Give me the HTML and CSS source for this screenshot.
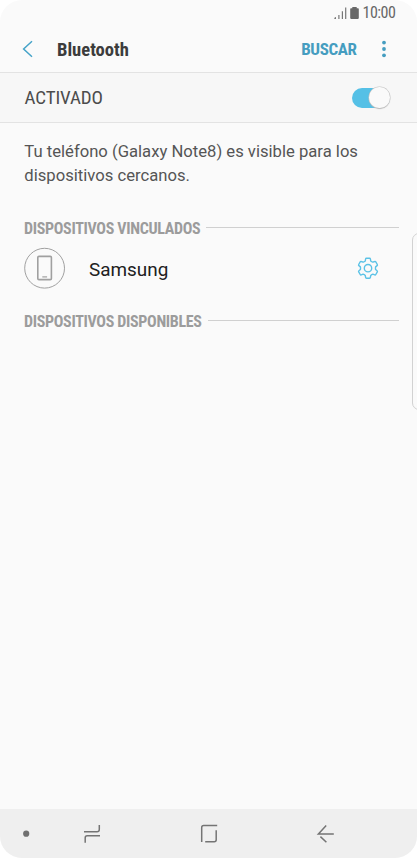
FILE: index.html
```html
<!DOCTYPE html>
<html lang="es">
<head>
<meta charset="utf-8">
<title>Bluetooth</title>
<link rel="stylesheet" href="styles.css">
</head>
<body>
<div class="phone">
  <div class="status">
    <svg class="signal" width="13" height="13" viewBox="0 0 13 13"><path d="M1.3 10.3v1.7M4.9 8v4M8.4 4.3V12M11.7 0.5V12" stroke="#777" stroke-width="1.2"/><path d="M0 12L2 10v2z" fill="#777"/></svg>
    <svg class="battery" width="9" height="13" viewBox="0 0 9 13"><path d="M2.3 0.1h4.4v1.2H8q.8 0 .8.8v9q0 .8-.8.8H1q-.8 0-.8-.8v-9q0-.8.8-.8h1.3z" fill="#686868"/></svg>
    <span class="cond time">10:00</span>
  </div>
  <header class="bar">
    <svg class="back" width="12" height="18" viewBox="0 0 12 18"><path d="M10 1.2L1.6 9l8.4 7.8" fill="none" stroke="#45a3c8" stroke-width="1.5"/></svg>
    <h1 class="cond title">Bluetooth</h1>
    <span class="cond search">BUSCAR</span>
    <svg class="more" width="4" height="18" viewBox="0 0 4 18" fill="#459dc0"><circle cx="2" cy="2.6" r="1.9"/><circle cx="2" cy="9" r="1.9"/><circle cx="2" cy="15.3" r="1.9"/></svg>
  </header>
  <div class="toggle-row">
    <span class="cond state">ACTIVADO</span>
    <span class="switch"><span class="knob"></span></span>
  </div>
  <p class="info">Tu teléfono (Galaxy Note8) es visible para los dispositivos cercanos.</p>
  <h2 class="section"><span class="cond linked">DISPOSITIVOS VINCULADOS</span></h2>
  <div class="device">
    <svg width="42" height="42" viewBox="0 0 42 42" fill="none" stroke="#a0a0a0"><circle cx="20.6" cy="21.2" r="19.9"/><rect x="13.8" y="9.4" width="13.6" height="23.2" rx="1.2" stroke-width="1.6"/><path d="M18.3 29.9h4.8" stroke-width="1.2"/></svg>
    <span class="name">Samsung</span>
    <svg class="gear" width="22" height="22" viewBox="0 0 22 22" fill="none" stroke="#5bc2e6" stroke-width="1.4" stroke-linejoin="round"><circle cx="11" cy="11.2" r="3.7"/><path d="M9.5 1.2h3q.8 0 .9.8l.3 1.9q1 .9 2.2 1.3l1.8-.7q.7-.3 1.1.4l1.5 2.6q.4.7-.2 1.1l-1.5 1.3q-.3 1.3 0 2.6l1.5 1.3q.6.4.2 1.1l-1.5 2.6q-.4.7-1.1.4l-1.8-.7q-1.2.4-2.2 1.3l-.3 1.9q-.1.8-.9.8h-3q-.8 0-.9-.8l-.3-1.9q-1-.9-2.2-1.3l-1.8.7q-.7.3-1.1-.4l-1.5-2.6q-.4-.7.2-1.1l1.5-1.3q.3-1.3 0-2.6L1.9 8.6q-.6-.4-.2-1.1l1.5-2.6q.4-.7 1.1-.4l1.8.7q1.2-.4 2.2-1.3L8.6 2q.1-.8.9-.8z"/></svg>
  </div>
  <h2 class="section available-head"><span class="cond available">DISPOSITIVOS DISPONIBLES</span></h2>
  <nav class="nav">
    <svg width="417" height="49" viewBox="0 0 417 49" fill="none" stroke="#747474" stroke-width="1.5"><circle cx="26.2" cy="24.7" r="3.1" fill="#707070" stroke="none"/><path d="M84 22.8h13q2.3 0 2.3-2.3V16M100 26.8H87.2q-2 0-2 2V33.8M201.7 33V18.6q0-2 2-2H217.2M216.2 21.2v9.6q0 2-2 2H205.2M333.8 24.9h-15.4L326.2 16.5M320.4 27.6l6 5.6"/></svg>
  </nav>
  <div class="edge"></div>
</div>
</body>
</html>
```
FILE: styles.css
```css
body {
  margin: 0;
  background: #fff;
  font-family: Roboto, sans-serif;
}
.phone {
  position: relative;
  display: flex;
  flex-direction: column;
  width: 417px;
  height: 858px;
  box-sizing: border-box;
  overflow: hidden;
  border-radius: 22px;
  background: #fafafa;
}
.cond {
  font-family: "Roboto Condensed", Roboto, sans-serif;
  font-stretch: 75%;
  white-space: nowrap;
}
.status {
  display: flex;
  align-items: center;
  height: 26px;
  padding-left: 334px;
}
.battery { margin-left: 3px; }
.time {
  margin-left: 3.5px;
  padding-bottom: 1px;
  font-size: 16px;
  letter-spacing: -0.5px;
  color: #666;
}
.bar {
  display: flex;
  align-items: center;
  height: 46px;
  padding: 0 31px 0 22px;
  border-bottom: 1px solid #e3e3e3;
}
.title {
  margin: 0 auto 0 23px;
  padding-top: 1.5px;
  font-size: 18.6px;
  font-weight: 700;
  color: #3c3c3c;
}
.search {
  font-size: 17px;
  font-weight: 700;
  letter-spacing: -0.4px;
  color: #459dc0;
}
.more { margin-left: 25.5px; }
.toggle-row {
  display: flex;
  align-items: center;
  justify-content: space-between;
  height: 49px;
  padding: 0 27px 0 24.5px;
  background: #f7f7f7;
  border-bottom: 1px solid #e3e3e3;
}
.state {
  font-size: 19px;
  letter-spacing: -0.1px;
  color: #4c4c4c;
}
.switch {
  display: flex;
  align-items: center;
  justify-content: flex-end;
  width: 37.5px;
  height: 20px;
  margin-right: .5px;
  border-radius: 10px;
  background: #55c0e6;
}
.knob {
  width: 20.5px;
  height: 21px;
  border-radius: 50%;
  background: #fafafa;
  box-shadow: 0 0 0 .5px #c4c4c4, 0 1px 1px #b4b4b4;
}
.info {
  width: 350px;
  margin: 17px 0 0 24.3px;
  font-size: 16.65px;
  line-height: 24px;
  color: #555;
}
.section {
  display: flex;
  align-items: center;
  gap: 6px;
  height: 20px;
  margin: 29.5px 18px 0 24px;
  font-size: 16px;
  font-weight: 700;
  letter-spacing: -0.33px;
  color: #9c9c9c;
}
.section .cond { padding-top: 1px; }
.section::after {
  content: "";
  flex: 1;
  height: 1px;
  background: #d0d0d0;
}
.device {
  display: flex;
  align-items: center;
  height: 42px;
  margin: 9.5px 38px 0 24px;
}
.name {
  margin: 0 auto 0 23px;
  padding-top: 2px;
  font-size: 18.9px;
  color: #202020;
}
.available-head { margin-top: 21px; }
.available-head .cond { padding-top: 2px; }
.nav {
  height: 49px;
  margin-top: auto;
  background: #efefef;
}
.nav svg { display: block; }
.edge {
  position: absolute;
  left: 412px;
  top: 233px;
  width: 12px;
  height: 175px;
  border: 1px solid #d2d2d2;
  border-radius: 7px;
}
```
